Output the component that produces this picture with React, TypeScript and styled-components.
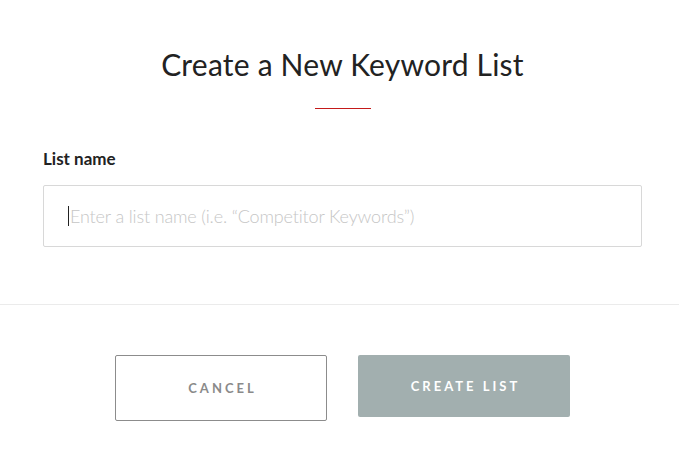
import React from 'react'
import styled, { createGlobalStyle } from 'styled-components'

const GlobalStyle = createGlobalStyle`
  html, body {
    margin: 0;
    padding: 0;
    background: #ffffff;
  }
  body {
    font-family: 'Lato', 'Noto Sans', sans-serif;
    color: #222222;
  }
`

const Modal = styled.div`
  width: 679px;
  background: #ffffff;
  display: flex;
  flex-direction: column;
`

const Header = styled.div`
  display: flex;
  flex-direction: column;
  align-items: center;
  padding: 44px 37px 0 43px;
`

const Title = styled.h1`
  margin: 0;
  font-size: 30px;
  font-weight: 400;
  line-height: 40px;
  color: #222222;
  letter-spacing: 0.2px;
`

const Accent = styled.span`
  display: block;
  width: 56px;
  height: 1px;
  margin-top: 24px;
  background: #c41a1a;
`

const Body = styled.div`
  display: flex;
  flex-direction: column;
  padding: 40px 37px 57px 43px;
`

const Label = styled.label`
  font-size: 17px;
  font-weight: 700;
  color: #222222;
  line-height: 20px;
  margin-bottom: 16px;
`

const Field = styled.div`
  position: relative;
`

const Caret = styled.span`
  position: absolute;
  left: 25px;
  top: 21px;
  width: 1px;
  height: 20px;
  background: #222222;
`

const TextInput = styled.input`
  box-sizing: border-box;
  width: 100%;
  height: 62px;
  padding: 0 24px 0 26px;
  border: 1px solid #d8d8d8;
  border-radius: 2px;
  font-family: 'Lato', 'Noto Sans', sans-serif;
  font-size: 18px;
  font-weight: 300;
  letter-spacing: -0.15px;
  color: #222222;
  outline: none;

  &::placeholder {
    color: #c6c6c6;
  }
`

const Divider = styled.hr`
  margin: 0;
  border: none;
  border-top: 1px solid #ebebeb;
`

const Footer = styled.div`
  display: flex;
  justify-content: center;
  align-items: flex-start;
  gap: 31px;
  padding: 50px 37px 0 43px;
`

const Button = styled.button<{ $primary?: boolean }>`
  box-sizing: border-box;
  width: 212px;
  height: ${(p) => (p.$primary ? '62px' : '66px')};
  border-radius: 2px;
  border: ${(p) => (p.$primary ? 'none' : '1px solid #8c8c8c')};
  background: ${(p) => (p.$primary ? '#a2afaf' : '#ffffff')};
  color: ${(p) => (p.$primary ? '#ffffff' : '#8a8a8a')};
  font-family: 'Lato', 'Noto Sans', sans-serif;
  font-size: 13px;
  font-weight: 700;
  letter-spacing: 3px;
  text-transform: uppercase;
  cursor: pointer;
  padding: 0 0 0 3px;
`

export default function App() {
  return (
    <>
      <GlobalStyle />
      <Modal>
        <Header>
          <Title>Create a New Keyword List</Title>
          <Accent />
        </Header>
        <Body>
          <Label htmlFor="list-name">List name</Label>
          <Field>
            <TextInput
              id="list-name"
              placeholder="Enter a list name (i.e. “Competitor Keywords”)"
            />
            <Caret />
          </Field>
        </Body>
        <Divider />
        <Footer>
          <Button>Cancel</Button>
          <Button $primary>Create List</Button>
        </Footer>
      </Modal>
    </>
  )
}
